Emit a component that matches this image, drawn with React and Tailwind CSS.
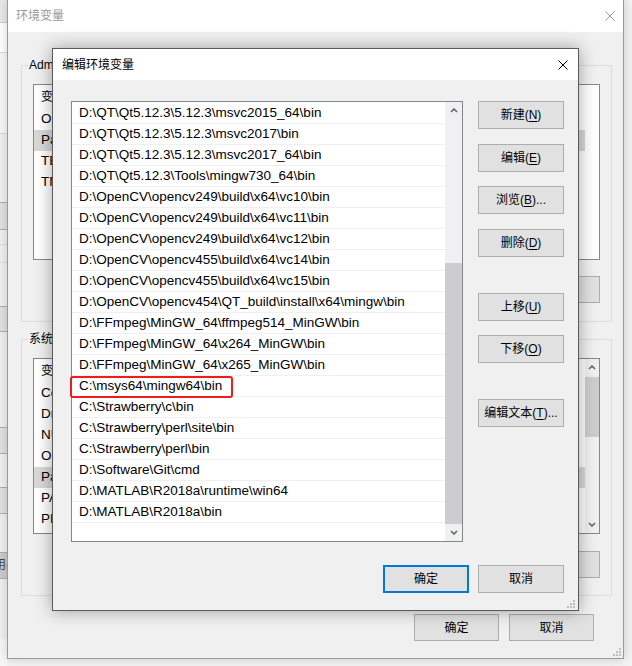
import React from "react";

const innerPaths = [
  "D:\\QT\\Qt5.12.3\\5.12.3\\msvc2015_64\\bin",
  "D:\\QT\\Qt5.12.3\\5.12.3\\msvc2017\\bin",
  "D:\\QT\\Qt5.12.3\\5.12.3\\msvc2017_64\\bin",
  "D:\\QT\\Qt5.12.3\\Tools\\mingw730_64\\bin",
  "D:\\OpenCV\\opencv249\\build\\x64\\vc10\\bin",
  "D:\\OpenCV\\opencv249\\build\\x64\\vc11\\bin",
  "D:\\OpenCV\\opencv249\\build\\x64\\vc12\\bin",
  "D:\\OpenCV\\opencv455\\build\\x64\\vc14\\bin",
  "D:\\OpenCV\\opencv455\\build\\x64\\vc15\\bin",
  "D:\\OpenCV\\opencv454\\QT_build\\install\\x64\\mingw\\bin",
  "D:\\FFmpeg\\MinGW_64\\ffmpeg514_MinGW\\bin",
  "D:\\FFmpeg\\MinGW_64\\x264_MinGW\\bin",
  "D:\\FFmpeg\\MinGW_64\\x265_MinGW\\bin",
  "C:\\msys64\\mingw64\\bin",
  "C:\\Strawberry\\c\\bin",
  "C:\\Strawberry\\perl\\site\\bin",
  "C:\\Strawberry\\perl\\bin",
  "D:\\Software\\Git\\cmd",
  "D:\\MATLAB\\R2018a\\runtime\\win64",
  "D:\\MATLAB\\R2018a\\bin",
];

const userVars = ["OneDrive", "Path", "TEMP", "TMP"];
const sysVars = [
  "ComSpec",
  "DriverData",
  "NUMBER_OF_PROCESSORS",
  "OS",
  "Path",
  "PATHEXT",
  "PROCESSOR_ARCHITECTURE",
];

const Chevron = ({ down }) => (
  <svg width="8" height="5" viewBox="0 0 8 5">
    <path
      d={down ? "M1 1l3 3 3-3" : "M1 4l3-3 3 3"}
      fill="none"
      stroke="#606060"
      strokeWidth="1.5"
    />
  </svg>
);

const CloseX = ({ color }) => (
  <svg width="10" height="10" viewBox="0 0 10 10">
    <path d="M0.5 0.5L9.5 9.5M9.5 0.5L0.5 9.5" stroke={color} strokeWidth="1" />
  </svg>
);

const Grip = () => (
  <svg width="8" height="8" viewBox="0 0 8 8" fill="#bdbdbd">
    <rect x="6" y="0" width="2" height="2" />
    <rect x="3" y="3" width="2" height="2" />
    <rect x="6" y="3" width="2" height="2" />
    <rect x="0" y="6" width="2" height="2" />
    <rect x="3" y="6" width="2" height="2" />
    <rect x="6" y="6" width="2" height="2" />
  </svg>
);

const Key = ({ children }) => <span className="underline underline-offset-2">{children}</span>;

const WinButton = ({ children, primary, className = "" }) => (
  <button
    className={
      "flex items-center justify-center bg-[#e1e1e1] text-[12px] text-black leading-none " +
      (primary ? "border-2 border-[#0078d7] " : "border border-[#adadad] ") +
      className
    }
  >
    {children}
  </button>
);

const VarList = ({ rows, selected, scroll }) => (
  <div className="flex w-[567px] h-[176px] border border-[#828790] bg-white">
    <div className="flex-1 flex flex-col">
      <div className="h-[24px] flex items-center text-[12px] text-black">
        <span className="pl-[7px]">变量</span>
      </div>
      {rows.map((r, i) => (
        <div
          key={r}
          className={
            "h-[21px] w-[551px] flex items-center pl-[7px] text-[13.5px] text-black whitespace-nowrap " +
            (i === selected ? "bg-[#d9d9d9]" : "")
          }
        >
          {r}
        </div>
      ))}
    </div>
    {scroll && (
      <div className="w-[17px] flex flex-col bg-[#f0f0f0]">
        <div className="h-[17px] flex items-center justify-center">
          <Chevron />
        </div>
        <div className="flex-1 flex flex-col">
          <div className="h-[60px] bg-[#cdcdcd] mt-[1px]" />
        </div>
        <div className="h-[17px] flex items-center justify-center">
          <Chevron down />
        </div>
      </div>
    )}
  </div>
);

const GroupBox = ({ label, children, className = "" }) => (
  <div className={"relative w-[591px] h-[257px] border border-[#dcdcdc] pl-[11px] pt-[18px] " + className}>
    <span className="absolute -top-[9px] left-[6px] px-[1px] bg-[#f0f0f0] text-[12px] leading-[16px] text-black">
      {label}
    </span>
    {children}
  </div>
);

const OuterWindow = () => (
  <div className="absolute left-[7px] -top-px w-[617px] h-[660px] flex flex-col border border-[#9a9a9a] bg-[#f0f0f0] shadow-[0_0_10px_rgba(0,0,0,0.18)]">
    <div className="h-[32px] bg-white flex items-center justify-between pl-[8px] pr-[8px]">
      <span className="text-[12px] text-[#9a9a9a]">环境变量</span>
      <CloseX color="#9a9a9a" />
    </div>
    <div className="flex-1 relative px-[13px] pt-[33px]">
      <GroupBox label="Administrator 的用户变量(U)">
        <VarList rows={userVars} selected={1} />
        <div className="w-[567px] flex justify-end gap-[10px] mt-[16px]">
          <WinButton className="w-[86px] h-[27px]">新建(<Key>N</Key>)...</WinButton>
          <WinButton className="w-[86px] h-[27px]">编辑(<Key>E</Key>)...</WinButton>
          <WinButton className="w-[86px] h-[27px]">删除(<Key>D</Key>)</WinButton>
        </div>
      </GroupBox>
      <GroupBox label="系统变量(S)" className="mt-[17px]">
        <VarList rows={sysVars} selected={4} scroll />
        <div className="w-[567px] flex justify-end gap-[10px] mt-[17px]">
          <WinButton className="w-[86px] h-[27px]">新建(<Key>W</Key>)...</WinButton>
          <WinButton className="w-[86px] h-[27px]">编辑(<Key>I</Key>)...</WinButton>
          <WinButton className="w-[86px] h-[27px]">删除(<Key>L</Key>)</WinButton>
        </div>
      </GroupBox>
      <div className="flex justify-end gap-[10px] mt-[18px] pr-[16px]">
        <WinButton className="w-[85px] h-[27px]">确定</WinButton>
        <WinButton className="w-[85px] h-[27px]">取消</WinButton>
      </div>
      <div className="absolute right-[2px] bottom-[2px]">
        <Grip />
      </div>
    </div>
  </div>
);

const InnerWindow = () => (
  <div className="absolute left-[52px] top-[48px] w-[527px] h-[563px] flex flex-col border border-[#5a5a5a] bg-[#f0f0f0] shadow-[0_0_16px_rgba(0,0,0,0.35)]">
    <div className="h-[31px] bg-white flex items-center justify-between pl-[9px] pr-[10px]">
      <span className="text-[12px] text-black">编辑环境变量</span>
      <CloseX color="#000" />
    </div>
    <div className="flex-1 relative pl-[18px] pr-[14px] pt-[21px]">
      <div className="flex">
        <div className="w-[392px] h-[441px] flex border border-[#828790] bg-white">
          <div className="flex-1 flex flex-col pt-px">
            {innerPaths.map((p, i) => (
              <div
                key={p}
                className="relative h-[21px] flex items-center pl-[7px] border-b border-[#f0f0f0] text-[13.5px] text-black whitespace-nowrap"
              >
                {p}
                {i === 13 && (
                  <span className="absolute -left-[2px] top-0 w-[163px] h-[22px] border-2 border-[#ee1c1c] rounded-[3px]" />
                )}
              </div>
            ))}
          </div>
          <div className="w-[17px] flex flex-col bg-[#f0f0f0]">
            <div className="h-[17px] flex items-center justify-center">
              <Chevron />
            </div>
            <div className="flex-1 flex flex-col justify-end">
              <div className="h-[261px] bg-[#cdcdcd]" />
            </div>
            <div className="h-[17px] flex items-center justify-center">
              <Chevron down />
            </div>
          </div>
        </div>
        <div className="ml-[15px] flex flex-col">
          <WinButton className="w-[86px] h-[28px]">新建(<Key>N</Key>)</WinButton>
          <WinButton className="w-[86px] h-[28px] mt-[15px]">编辑(<Key>E</Key>)</WinButton>
          <WinButton className="w-[86px] h-[28px] mt-[14px]">浏览(<Key>B</Key>)...</WinButton>
          <WinButton className="w-[86px] h-[28px] mt-[15px]">删除(<Key>D</Key>)</WinButton>
          <WinButton className="w-[86px] h-[28px] mt-[36px]">上移(<Key>U</Key>)</WinButton>
          <WinButton className="w-[86px] h-[28px] mt-[14px]">下移(<Key>O</Key>)</WinButton>
          <WinButton className="w-[86px] h-[28px] mt-[36px]">编辑文本(<Key>T</Key>)...</WinButton>
        </div>
      </div>
      <div className="flex justify-end gap-[9px] mt-[23px]">
        <WinButton primary className="w-[86px] h-[28px]">确定</WinButton>
        <WinButton className="w-[86px] h-[28px]">取消</WinButton>
      </div>
      <div className="absolute right-[3px] bottom-[2px]">
        <Grip />
      </div>
    </div>
  </div>
);

const BackWindowEdge = () => (
  <div className="absolute left-0 top-0 w-[7px] h-full flex flex-col bg-[#f0f0f0]">
    <div className="h-[23px] bg-[#e9e9e9] border-b border-[#cfcfcf]" />
    <div className="h-[30px] bg-white border-b border-[#dadada]" />
    <div className="h-[81px] bg-[#f7f7f7] border-b border-[#dadada]" />
    <div className="h-[28px] mt-[68px] bg-[#e1e1e1] border-y border-[#adadad]" />
    <div className="h-[19px] mt-[14px] border-y border-[#dadada]" />
    <div className="h-[26px] mt-[43px] bg-[#e1e1e1] border-y border-[#adadad]" />
    <div className="h-[27px] mt-[95px] bg-[#e1e1e1] border-y border-[#adadad]" />
    <div className="h-[27px] mt-[33px] bg-[#e1e1e1] border-y border-[#adadad]" />
    <div className="h-[27px] mt-[38px] bg-[#cccccc] border-y border-[#adadad] text-[12px] text-[#444] leading-[25px] whitespace-nowrap overflow-hidden">
      <span className="-ml-[6px]">用(</span>
    </div>
    <div className="flex-1 mt-[60px] bg-[#f7f7f7]" />
  </div>
);

export default function App() {
  return (
    <div className="relative w-[632px] h-[666px] overflow-hidden bg-[#f3f3f3] font-['Liberation_Sans','Noto_Sans_CJK_SC',sans-serif]">
      <BackWindowEdge />
      <OuterWindow />
      <InnerWindow />
    </div>
  );
}
